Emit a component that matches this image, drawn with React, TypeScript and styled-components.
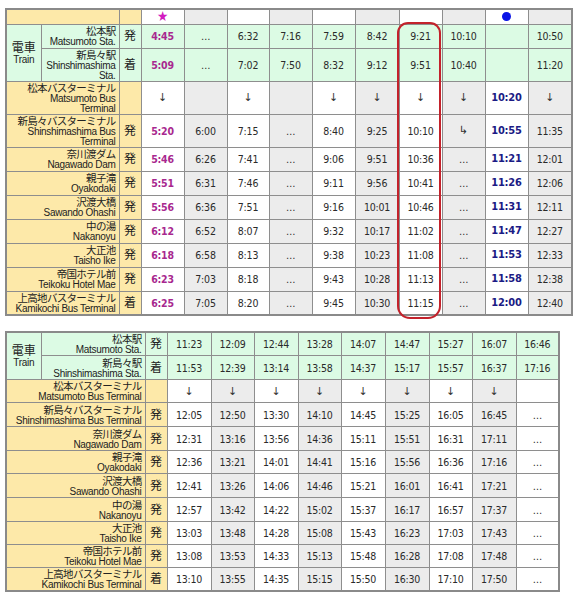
import React from "react";
import styled, { createGlobalStyle, css } from "styled-components";

const GlobalStyle = createGlobalStyle`
  html, body { margin: 0; padding: 0; background: #ffffff; }
  body { font-family: "Liberation Sans", "Noto Sans CJK JP", sans-serif; color: #222; }
`;

type Bg = "orange" | "green" | "gray" | "white";
type Tone = "normal" | "magenta" | "navy";

const bgColor: Record<Bg, string> = {
  orange: "#fde9a9",
  green: "#dcfbe4",
  gray: "#ececec",
  white: "#ffffff",
};

const Page = styled.div`
  padding: 8px 0 0 5px;
  display: flex;
  flex-direction: column;
  align-items: flex-start;
  gap: 15px;
`;

const TableWrap = styled.div`
  position: relative;
`;

const Table = styled.table`
  border-collapse: collapse;
  table-layout: fixed;
  border: 2px solid #8a8a8a;
`;

const Row = styled.tr<{ $h: number }>`
  height: ${(p) => p.$h}px;
`;

const Cell = styled.td<{ $bg: Bg }>`
  border: 1px solid #8e8e8e;
  padding: 0;
  background: ${(p) => bgColor[p.$bg]};
  vertical-align: middle;
`;

const TimeCell = styled(Cell)<{ $tone: Tone }>`
  text-align: center;
  font-family: "DejaVu Sans Condensed", "Liberation Sans Narrow", "Liberation Sans", sans-serif;
  font-size: 10.5px;
  line-height: 12px;
  letter-spacing: -0.2px;
  color: #2a2a2a;
  ${(p) =>
    p.$tone === "magenta" &&
    css`
      color: #a8288f;
      font-weight: bold;
    `}
  ${(p) =>
    p.$tone === "navy" &&
    css`
      color: #1b1b85;
      font-weight: bold;
      font-size: 11px;
    `}
`;

const Arrow = styled.span`
  font-family: "DejaVu Sans", sans-serif;
  font-size: 11px;
  color: #333;
`;

const StationCell = styled(Cell)`
  text-align: right;
  padding-right: 3px;
`;

const KindCell = styled(Cell)`
  text-align: center;
  font-family: "Liberation Sans", "Noto Sans CJK JP", sans-serif;
  font-size: 12px;
  line-height: 14px;
  color: #222;
`;

const TrainCell = styled(Cell)`
  text-align: center;
`;

const Ja = styled.div<{ $big?: boolean }>`
  font-family: "Liberation Sans", "Noto Sans CJK JP", sans-serif;
  font-size: ${(p) => (p.$big ? 12 : 10.5)}px;
  letter-spacing: ${(p) => (p.$big ? 0 : -0.7)}px;
  line-height: ${(p) => (p.$big ? 14 : 12)}px;
  color: #222;
`;

const En = styled.div`
  font-family: "Liberation Sans", sans-serif;
  font-size: 10px;
  letter-spacing: -0.3px;
  line-height: 10px;
  white-space: pre-line;
  color: #222;
`;

const Star = styled.span`
  color: #d21bc0;
  font-size: 14px;
  line-height: 12px;
`;

const Dot = styled.span`
  display: inline-block;
  width: 9px;
  height: 9px;
  border-radius: 50%;
  background: #0a14e6;
`;

const Highlight = styled.div`
  position: absolute;
  left: 392px;
  top: 14px;
  width: 40px;
  height: 293px;
  border: 2px solid #c3222b;
  border-radius: 11px 11px 13px 13px;
  pointer-events: none;
`;

type Station = { ja: string; en: string; enWrapped?: string; kind: string };

const busStops: Station[] = [
  {
    ja: "新島々バスターミナル",
    en: "Shinshimashima Bus Terminal",
    enWrapped: "Shinshimashima Bus\nTerminal",
    kind: "発",
  },
  { ja: "奈川渡ダム", en: "Nagawado Dam", kind: "発" },
  { ja: "親子滝", en: "Oyakodaki", kind: "発" },
  { ja: "沢渡大橋", en: "Sawando Ohashi", kind: "発" },
  { ja: "中の湯", en: "Nakanoyu", kind: "発" },
  { ja: "大正池", en: "Taisho Ike", kind: "発" },
  { ja: "帝国ホテル前", en: "Teikoku Hotel Mae", kind: "発" },
  { ja: "上高地バスターミナル", en: "Kamikochi Bus Terminal", kind: "着" },
];

const D = "…";
const A = "↓";

type TableData = {
  train1: string[];
  train2: string[];
  mbt: string[];
  stops: string[][];
};

const topData: TableData = {
  train1: ["4:45", D, "6:32", "7:16", "7:59", "8:42", "9:21", "10:10", "", "10:50"],
  train2: ["5:09", D, "7:02", "7:50", "8:32", "9:12", "9:51", "10:40", "", "11:20"],
  mbt: [A, "", A, "", A, A, A, A, "10:20", A],
  stops: [
    ["5:20", "6:00", "7:15", D, "8:40", "9:25", "10:10", "↳", "10:55", "11:35"],
    ["5:46", "6:26", "7:41", D, "9:06", "9:51", "10:36", D, "11:21", "12:01"],
    ["5:51", "6:31", "7:46", D, "9:11", "9:56", "10:41", D, "11:26", "12:06"],
    ["5:56", "6:36", "7:51", D, "9:16", "10:01", "10:46", D, "11:31", "12:11"],
    ["6:12", "6:52", "8:07", D, "9:32", "10:17", "11:02", D, "11:47", "12:27"],
    ["6:18", "6:58", "8:13", D, "9:38", "10:23", "11:08", D, "11:53", "12:33"],
    ["6:23", "7:03", "8:18", D, "9:43", "10:28", "11:13", D, "11:58", "12:38"],
    ["6:25", "7:05", "8:20", D, "9:45", "10:30", "11:15", D, "12:00", "12:40"],
  ],
};

const bottomData: TableData = {
  train1: ["11:23", "12:09", "12:44", "13:28", "14:07", "14:47", "15:27", "16:07", "16:46"],
  train2: ["11:53", "12:39", "13:14", "13:58", "14:37", "15:17", "15:57", "16:37", "17:16"],
  mbt: [A, A, A, A, A, A, A, A, ""],
  stops: [
    ["12:05", "12:50", "13:30", "14:10", "14:45", "15:25", "16:05", "16:45", D],
    ["12:31", "13:16", "13:56", "14:36", "15:11", "15:51", "16:31", "17:11", D],
    ["12:36", "13:21", "14:01", "14:41", "15:16", "15:56", "16:36", "17:16", D],
    ["12:41", "13:26", "14:06", "14:46", "15:21", "16:01", "16:41", "17:21", D],
    ["12:57", "13:42", "14:22", "15:02", "15:37", "16:17", "16:57", "17:37", D],
    ["13:03", "13:48", "14:28", "15:08", "15:43", "16:23", "17:03", "17:43", D],
    ["13:08", "13:53", "14:33", "15:13", "15:48", "16:28", "17:08", "17:48", D],
    ["13:10", "13:55", "14:35", "15:15", "15:50", "16:30", "17:10", "17:50", D],
  ],
};

type Config = {
  data: TableData;
  widths: number[];
  nameWidth: number;
  header: boolean;
  narrow: boolean;
  heights: number[];
  tones: Tone[];
};

const Timetable: React.FC<Config> = ({ data, widths, nameWidth, header, narrow, heights, tones }) => {
  const colBg = (i: number): Bg => (i % 2 === 1 ? "gray" : "white");
  const tone = (i: number, v: string): Tone =>
    v === A || v === D || v === "" || v === "↳" ? "normal" : tones[i];
  const content = (v: string) => (v === A || v === "↳" ? <Arrow>{v}</Arrow> : v);
  let r = 0;
  const h = () => heights[r++];
  return (
    <Table>
      <colgroup>
        <col style={{ width: 35 }} />
        <col style={{ width: nameWidth }} />
        <col style={{ width: 22 }} />
        {widths.map((w, i) => (
          <col key={i} style={{ width: w }} />
        ))}
      </colgroup>
      <tbody>
        {header && (
          <Row $h={h()}>
            <Cell $bg="orange" colSpan={2} />
            <Cell $bg="orange" />
            {widths.map((_, i) => (
              <TimeCell key={i} $bg={colBg(i)} $tone="normal">
                {i === 0 && <Star>★</Star>}
                {i === 8 && <Dot />}
              </TimeCell>
            ))}
          </Row>
        )}
        <Row $h={h()}>
          <TrainCell $bg="green" rowSpan={2}>
            <Ja $big>電車</Ja>
            <En>Train</En>
          </TrainCell>
          <StationCell $bg="green">
            <Ja>松本駅</Ja>
            <En>Matsumoto Sta.</En>
          </StationCell>
          <KindCell $bg="green">発</KindCell>
          {data.train1.map((v, i) => (
            <TimeCell key={i} $bg="green" $tone={tone(i, v)}>
              {content(v)}
            </TimeCell>
          ))}
        </Row>
        <Row $h={h()}>
          <StationCell $bg="green">
            <Ja>新島々駅</Ja>
            <En>{narrow ? "Shinshimashima\nSta." : "Shinshimashima Sta."}</En>
          </StationCell>
          <KindCell $bg="green">着</KindCell>
          {data.train2.map((v, i) => (
            <TimeCell key={i} $bg="green" $tone={tone(i, v)}>
              {content(v)}
            </TimeCell>
          ))}
        </Row>
        <Row $h={h()}>
          <StationCell $bg="orange" colSpan={2}>
            <Ja>松本バスターミナル</Ja>
            <En>{narrow ? "Matsumoto Bus\nTerminal" : "Matsumoto Bus Terminal"}</En>
          </StationCell>
          <KindCell $bg="orange" />
          {data.mbt.map((v, i) => (
            <TimeCell key={i} $bg={colBg(i)} $tone={tone(i, v)}>
              {content(v)}
            </TimeCell>
          ))}
        </Row>
        {busStops.map((s, si) => (
          <Row key={s.en} $h={h()}>
            <StationCell $bg="orange" colSpan={2}>
              <Ja>{s.ja}</Ja>
              <En>{narrow && s.enWrapped ? s.enWrapped : s.en}</En>
            </StationCell>
            <KindCell $bg="orange">{s.kind}</KindCell>
            {data.stops[si].map((v, i) => (
              <TimeCell key={i} $bg={colBg(i)} $tone={tone(i, v)}>
                {content(v)}
              </TimeCell>
            ))}
          </Row>
        ))}
      </tbody>
    </Table>
  );
};

export default function App() {
  return (
    <>
      <GlobalStyle />
      <Page>
        <TableWrap>
          <Timetable
            data={topData}
            widths={[43, 43, 42, 43, 43, 44, 43, 43, 43, 44]}
            nameWidth={78}
            header
            narrow
            heights={[15, 24, 32, 32, 33, 24, 24, 24, 24, 24, 24, 22]}
            tones={["magenta", "normal", "normal", "normal", "normal", "normal", "normal", "normal", "navy", "normal"]}
          />
          <Highlight />
        </TableWrap>
        <TableWrap>
          <Timetable
            data={bottomData}
            widths={[44, 43, 44, 43, 44, 44, 43, 44, 43]}
            nameWidth={104}
            header={false}
            narrow={false}
            heights={[24, 24, 23, 24, 24, 23, 24, 24, 23, 23, 23]}
            tones={["normal", "normal", "normal", "normal", "normal", "normal", "normal", "normal", "normal"]}
          />
        </TableWrap>
      </Page>
    </>
  );
}
